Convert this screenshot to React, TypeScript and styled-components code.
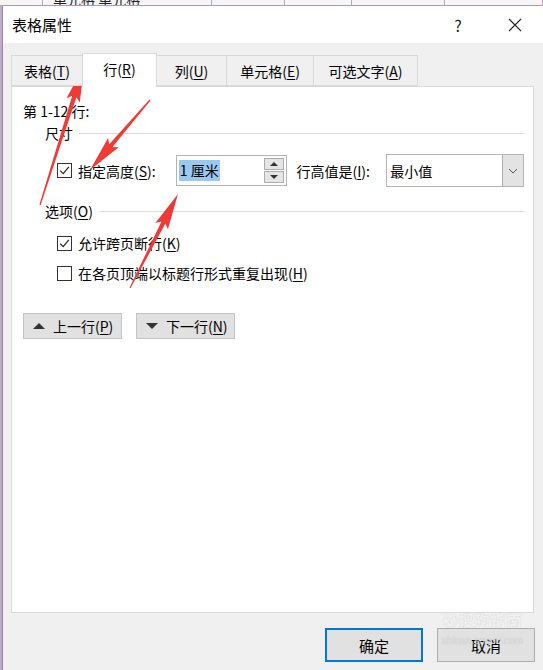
import * as React from 'react';
import styled, { createGlobalStyle } from 'styled-components';

const GlobalStyle = createGlobalStyle`
  body {
    margin: 0;
    font-family: "Noto Sans CJK SC", "Noto Sans", sans-serif;
    color: #000;
  }
`;

type Arrow = { x1: number; y1: number; x2: number; y2: number };

// red annotation arrows drawn over the screenshot
const arrows: Arrow[] = [
  { x1: 40, y1: 205, x2: 84, y2: 66 },
  { x1: 150, y1: 100, x2: 90, y2: 170 },
  { x1: 130, y1: 288, x2: 178, y2: 194 },
];

function arrowPoints({ x1, y1, x2, y2 }: Arrow) {
  const headLen = 32;
  const headW = 7;
  const shaftW = 2.2;
  const dx = x2 - x1;
  const dy = y2 - y1;
  const len = Math.hypot(dx, dy);
  const ux = dx / len;
  const uy = dy / len;
  const nx = -uy;
  const ny = ux;
  const bx = x2 - ux * headLen;
  const by = y2 - uy * headLen;
  const p = (x: number, y: number) => `${x.toFixed(1)},${y.toFixed(1)}`;
  return [
    p(x1 + nx * 0.6, y1 + ny * 0.6),
    p(bx + nx * shaftW, by + ny * shaftW),
    p(bx - ux * 4 + nx * headW, by - uy * 4 + ny * headW),
    p(x2, y2),
    p(bx - ux * 4 - nx * headW, by - uy * 4 - ny * headW),
    p(bx - nx * shaftW, by - ny * shaftW),
    p(x1 - nx * 0.6, y1 - ny * 0.6),
  ].join(' ');
}

const Page = styled.div`
  position: relative;
  width: 543px;
  height: 670px;
  overflow: hidden;
  background: #bcb0bf;
`;

const TopStrip = styled.div`
  display: flex;
  height: 5px;
  background: #f6f6f6;
  overflow: hidden;
`;

const StripCell = styled.div<{ $w: number }>`
  width: ${(p) => p.$w}px;
  flex-shrink: 0;
  border-right: 1px solid #b9a6bf;
  font-size: 14px;
  line-height: 12px;
  margin-top: -7px;
  padding-left: 10px;
  box-sizing: border-box;
  white-space: nowrap;
  color: #222;
`;

const Dialog = styled.div`
  margin-left: 2px;
  height: 665px;
  border-left: 1px solid #a27fae;
  border-top: 1px solid #ad96b6;
  background: #f0f0f0;
  display: flex;
  flex-direction: column;
`;

const TitleBar = styled.div`
  height: 37px;
  background: #fff;
  display: flex;
  align-items: center;
  padding-left: 9px;
  padding-right: 5px;
`;

const Title = styled.div`
  flex: 1;
  font-size: 15px;
  line-height: 20px;
`;

const TitleButton = styled.div<{ $w: number }>`
  width: ${(p) => p.$w}px;
  height: 37px;
  display: flex;
  align-items: center;
  justify-content: center;
  font-size: 16px;
  color: #222;
`;

const Body = styled.div`
  flex: 1;
  padding: 10px 9px 0 8px;
  display: flex;
  flex-direction: column;
`;

const TabRow = styled.div`
  display: flex;
  align-items: flex-end;
  height: 33px;
  margin-left: 1px;
  position: relative;
  z-index: 1;
`;

const Tab = styled.div<{ $active?: boolean; $w: number }>`
  width: ${(p) => p.$w}px;
  box-sizing: border-box;
  height: ${(p) => (p.$active ? 34 : 31)}px;
  margin-bottom: ${(p) => (p.$active ? -1 : 0)}px;
  background: ${(p) => (p.$active ? '#fff' : '#f0f0f0')};
  border: 1px solid #d9d9d9;
  border-bottom: ${(p) => (p.$active ? 'none' : '1px solid #d9d9d9')};
  margin-left: -1px;
  display: flex;
  align-items: center;
  justify-content: center;
  font-size: 14px;
  line-height: 20px;
  padding-bottom: ${(p) => (p.$active ? 3 : 0)}px;
`;

const Key = styled.span`
  text-decoration: underline;
  text-underline-offset: 2px;
`;

const Panel = styled.div`
  width: 523px;
  height: 527px;
  box-sizing: border-box;
  background: #fff;
  border: 1px solid #d9d9d9;
  padding: 14px 9px 0 11px;
  display: flex;
  flex-direction: column;
`;

const Line = styled.div`
  font-size: 14px;
  line-height: 20px;
  height: 20px;
  white-space: nowrap;
`;

const GroupHeader = styled.div<{ $top: number }>`
  display: flex;
  align-items: center;
  gap: 6px;
  margin: ${(p) => p.$top}px 0 0 22px;
  font-size: 14px;
  line-height: 20px;
  height: 20px;

  &::after {
    content: '';
    flex: 1;
    height: 1px;
    background: #dcdcdc;
  }
`;

const FieldRow = styled.div`
  display: flex;
  align-items: center;
  height: 33px;
  margin: 11px 0 0 34px;
`;

const CheckRow = styled.label<{ $top: number }>`
  display: flex;
  align-items: center;
  gap: 6px;
  height: 20px;
  margin: ${(p) => p.$top}px 0 0 34px;
  font-size: 14px;
  line-height: 20px;
  white-space: nowrap;
`;

const Box = styled.span`
  width: 15px;
  height: 15px;
  box-sizing: border-box;
  border: 1px solid #333;
  background: #fff;
  display: flex;
  align-items: center;
  justify-content: center;
  flex-shrink: 0;
`;

const FieldLabel = styled.span<{ $w: number }>`
  width: ${(p) => p.$w}px;
  font-size: 14px;
  line-height: 20px;
  white-space: nowrap;
`;

const SpinInput = styled.div`
  width: 111px;
  height: 31px;
  box-sizing: border-box;
  border: 1px solid #b4b4b4;
  display: flex;
  align-items: center;
  padding: 0 2px 0 2px;
  margin-right: 10px;
`;

const Selected = styled.span`
  background: #99c9ef;
  font-size: 14px;
  line-height: 21px;
  padding: 0 1px;
  margin-right: auto;
`;

const SpinButtons = styled.div`
  display: flex;
  flex-direction: column;
  gap: 1px;
`;

const SpinButton = styled.div`
  width: 20px;
  height: 12px;
  box-sizing: border-box;
  border: 1px solid #adadad;
  background: #e5e5e5;
  display: flex;
  align-items: center;
  justify-content: center;
`;

const Select = styled.div`
  width: 138px;
  height: 33px;
  box-sizing: border-box;
  border: 1px solid #b4b4b4;
  display: flex;
  align-items: stretch;
  background: #fff;
`;

const SelectValue = styled.div`
  flex: 1;
  display: flex;
  align-items: center;
  padding-left: 3px;
  font-size: 14px;
`;

const SelectArrow = styled.div`
  width: 20px;
  background: #e3e3e3;
  border-left: 1px solid #adadad;
  display: flex;
  align-items: center;
  justify-content: center;
`;

const ButtonRow = styled.div`
  display: flex;
  gap: 14px;
  margin-top: 30px;
`;

const NavButton = styled.div`
  width: 99px;
  height: 26px;
  box-sizing: border-box;
  background: #e1e1e1;
  border: 1px solid #c4c4c4;
  display: flex;
  align-items: center;
  padding-left: 9px;
  gap: 8px;
  font-size: 14px;
  line-height: 20px;
`;

const Footer = styled.div`
  display: flex;
  justify-content: flex-end;
  gap: 14px;
  padding: 15px 8px 0 0;
  margin-right: -9px;
`;

const DialogButton = styled.div<{ $primary?: boolean }>`
  width: 98px;
  height: 34px;
  box-sizing: border-box;
  background: #e1e1e1;
  border: ${(p) => (p.$primary ? '2px solid #0078d7' : '1px solid #adadad')};
  display: flex;
  align-items: center;
  justify-content: center;
  font-size: 15px;
`;

const Watermark = styled.div`
  position: absolute;
  left: 442px;
  top: 611px;
  display: flex;
  flex-direction: column;
  align-items: center;
  color: rgba(255, 255, 255, 0.75);
  text-shadow: 0 0 1px rgba(150, 150, 150, 0.5);
  pointer-events: none;
`;

const WatermarkTitle = styled.div`
  font-size: 15px;
  font-weight: 700;
  line-height: 18px;
  letter-spacing: 1px;
`;

const WatermarkUrl = styled.div`
  font-family: "Liberation Sans", sans-serif;
  font-size: 10px;
  color: rgba(230, 230, 230, 0.8);
  line-height: 12px;
  margin-top: 6px;
`;

const Overlay = styled.svg`
  position: absolute;
  left: 0;
  top: 0;
  pointer-events: none;
`;

const Check = () => (
  <svg width="11" height="11" viewBox="0 0 11 11">
    <path d="M1.2 5.6 L4.2 8.6 L9.8 1.8" fill="none" stroke="#222" strokeWidth="1.2" />
  </svg>
);

const Tri = ({ up, size = 5 }: { up?: boolean; size?: number }) => (
  <svg width={size * 2} height={size} viewBox="0 0 10 5">
    <path d={up ? 'M0 5 L5 0 L10 5 Z' : 'M0 0 L5 5 L10 0 Z'} fill="#333" />
  </svg>
);

export default function App() {
  return (
    <>
      <GlobalStyle />
      <Page>
        <TopStrip>
          <StripCell $w={43} />
          <StripCell $w={169}>单元格 单元格</StripCell>
          <StripCell $w={73} />
          <StripCell $w={67} />
          <StripCell $w={93} />
          <StripCell $w={98} />
        </TopStrip>
        <Dialog>
          <TitleBar>
            <Title>表格属性</Title>
            <TitleButton $w={40}>?</TitleButton>
            <TitleButton $w={14} />
            <TitleButton $w={46}>
              <svg width="14" height="14" viewBox="0 0 14 14">
                <path d="M1 1 L13 13 M13 1 L1 13" stroke="#222" strokeWidth="1.1" />
              </svg>
            </TitleButton>
          </TitleBar>
          <Body>
            <TabRow>
              <Tab $w={72}>
                表格(<Key>T</Key>)
              </Tab>
              <Tab $w={75} $active>
                行(<Key>R</Key>)
              </Tab>
              <Tab $w={71}>
                列(<Key>U</Key>)
              </Tab>
              <Tab $w={88}>
                单元格(<Key>E</Key>)
              </Tab>
              <Tab $w={105}>
                可选文字(<Key>A</Key>)
              </Tab>
            </TabRow>
            <Panel>
              <Line>第 1-12 行:</Line>
              <GroupHeader $top={2}>尺寸</GroupHeader>
              <FieldRow>
                <Box>
                  <Check />
                </Box>
                <FieldLabel $w={98} style={{ marginLeft: 6 }}>
                  指定高度(<Key>S</Key>):
                </FieldLabel>
                <SpinInput>
                  <Selected>1 厘米</Selected>
                  <SpinButtons>
                    <SpinButton>
                      <Tri up size={4} />
                    </SpinButton>
                    <SpinButton>
                      <Tri size={4} />
                    </SpinButton>
                  </SpinButtons>
                </SpinInput>
                <FieldLabel $w={90}>
                  行高值是(<Key>I</Key>):
                </FieldLabel>
                <Select>
                  <SelectValue>最小值</SelectValue>
                  <SelectArrow>
                    <svg width="10" height="6" viewBox="0 0 10 6">
                      <path d="M1 1 L5 5 L9 1" fill="none" stroke="#555" strokeWidth="1" />
                    </svg>
                  </SelectArrow>
                </Select>
              </FieldRow>
              <GroupHeader $top={14}>
                <span>
                  选项(<Key>O</Key>)
                </span>
              </GroupHeader>
              <CheckRow $top={12}>
                <Box>
                  <Check />
                </Box>
                <span>
                  允许跨页断行(<Key>K</Key>)
                </span>
              </CheckRow>
              <CheckRow $top={10}>
                <Box />
                <span>
                  在各页顶端以标题行形式重复出现(<Key>H</Key>)
                </span>
              </CheckRow>
              <ButtonRow>
                <NavButton>
                  <Tri up size={6} />
                  <span>
                    上一行(<Key>P</Key>)
                  </span>
                </NavButton>
                <NavButton>
                  <Tri size={6} />
                  <span>
                    下一行(<Key>N</Key>)
                  </span>
                </NavButton>
              </ButtonRow>
            </Panel>
            <Footer>
              <DialogButton $primary>确定</DialogButton>
              <DialogButton>取消</DialogButton>
            </Footer>
          </Body>
        </Dialog>
        <Watermark>
          <WatermarkTitle>Ⓢ搜狗指南</WatermarkTitle>
          <WatermarkUrl>zhinan.sogou.com</WatermarkUrl>
        </Watermark>
        <Overlay width="543" height="670" viewBox="0 0 543 670">
          {arrows.map((a, i) => (
            <polygon key={i} points={arrowPoints(a)} fill="#ee3b36" />
          ))}
        </Overlay>
      </Page>
    </>
  );
}
